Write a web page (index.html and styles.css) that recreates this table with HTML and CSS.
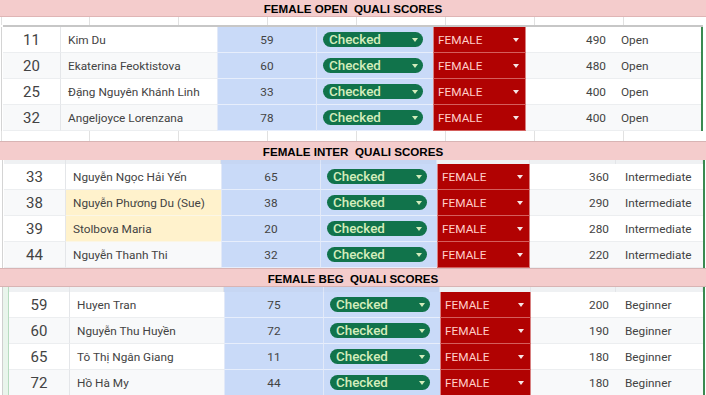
FILE: index.html
```html
<!DOCTYPE html>
<html lang="vi">
<head>
<meta charset="utf-8">
<title>Female Quali Scores</title>
<link rel="stylesheet" href="styles.css">
</head>
<body>
<div class="sheet">

  <section class="sec s1">
    <div class="band">FEMALE OPEN&nbsp; QUALI SCORES</div>
    <div class="gridgap"></div>
    <div class="frozen"><div class="frozen-line"></div><div class="edge"></div><div class="rest"></div></div>
    <div class="row"><div class="gut"></div><div class="c num">11</div><div class="c name">Kim Du</div><div class="c score">59</div><div class="c chk"><span class="chip">Checked<i class="arr"></i></span></div><div class="c sex">FEMALE<i class="arr"></i></div><div class="c pts">490</div><div class="c lvl">Open</div><div class="edge"></div><div class="rest"></div></div>
    <div class="row alt"><div class="gut"></div><div class="c num">20</div><div class="c name">Ekaterina Feoktistova</div><div class="c score">60</div><div class="c chk"><span class="chip">Checked<i class="arr"></i></span></div><div class="c sex">FEMALE<i class="arr"></i></div><div class="c pts">480</div><div class="c lvl">Open</div><div class="edge"></div><div class="rest"></div></div>
    <div class="row"><div class="gut"></div><div class="c num">25</div><div class="c name">Đặng Nguyên Khánh Linh</div><div class="c score">33</div><div class="c chk"><span class="chip">Checked<i class="arr"></i></span></div><div class="c sex">FEMALE<i class="arr"></i></div><div class="c pts">400</div><div class="c lvl">Open</div><div class="edge"></div><div class="rest"></div></div>
    <div class="row alt"><div class="gut"></div><div class="c num">32</div><div class="c name">Angeljoyce Lorenzana</div><div class="c score">78</div><div class="c chk"><span class="chip">Checked<i class="arr"></i></span></div><div class="c sex">FEMALE<i class="arr"></i></div><div class="c pts">400</div><div class="c lvl">Open</div><div class="edge"></div><div class="rest"></div></div>
    <div class="gridgap tail"></div>
  </section>

  <section class="sec s2">
    <div class="band">FEMALE INTER&nbsp; QUALI SCORES</div>
    <div class="shade"><div class="gut"></div><div class="sh"></div><div class="sh"></div><div class="sh blue"></div><div class="sh blue"></div><div class="sh"></div><div class="sh"></div><div class="sh"></div><div class="edge"></div><div class="rest"></div></div>
    <div class="row"><div class="gut"></div><div class="c num">33</div><div class="c name">Nguyễn Ngọc Hải Yến</div><div class="c score">65</div><div class="c chk"><span class="chip">Checked<i class="arr"></i></span></div><div class="c sex">FEMALE<i class="arr"></i></div><div class="c pts">360</div><div class="c lvl">Intermediate</div><div class="edge"></div><div class="rest"></div></div>
    <div class="row alt"><div class="gut"></div><div class="c num">38</div><div class="c name hl">Nguyễn Phương Du (Sue)</div><div class="c score">38</div><div class="c chk"><span class="chip">Checked<i class="arr"></i></span></div><div class="c sex">FEMALE<i class="arr"></i></div><div class="c pts">290</div><div class="c lvl">Intermediate</div><div class="edge"></div><div class="rest"></div></div>
    <div class="row"><div class="gut"></div><div class="c num">39</div><div class="c name hl">Stolbova Maria</div><div class="c score">20</div><div class="c chk"><span class="chip">Checked<i class="arr"></i></span></div><div class="c sex">FEMALE<i class="arr"></i></div><div class="c pts">280</div><div class="c lvl">Intermediate</div><div class="edge"></div><div class="rest"></div></div>
    <div class="row alt"><div class="gut"></div><div class="c num">44</div><div class="c name">Nguyễn Thanh Thi</div><div class="c score">32</div><div class="c chk"><span class="chip">Checked<i class="arr"></i></span></div><div class="c sex">FEMALE<i class="arr"></i></div><div class="c pts">220</div><div class="c lvl">Intermediate</div><div class="edge"></div><div class="rest"></div></div>
  </section>

  <section class="sec s3">
    <div class="band">FEMALE BEG&nbsp; QUALI SCORES</div>
    <div class="shade"><div class="gut"></div><div class="sh"></div><div class="sh"></div><div class="sh blue"></div><div class="sh blue"></div><div class="sh"></div><div class="sh"></div><div class="sh"></div><div class="edge"></div><div class="rest"></div></div>
    <div class="row"><div class="gut"></div><div class="c num">59</div><div class="c name">Huyen Tran</div><div class="c score">75</div><div class="c chk"><span class="chip">Checked<i class="arr"></i></span></div><div class="c sex">FEMALE<i class="arr"></i></div><div class="c pts">200</div><div class="c lvl">Beginner</div><div class="edge"></div><div class="rest"></div></div>
    <div class="row alt"><div class="gut"></div><div class="c num">60</div><div class="c name">Nguyễn Thu Huyền</div><div class="c score">72</div><div class="c chk"><span class="chip">Checked<i class="arr"></i></span></div><div class="c sex">FEMALE<i class="arr"></i></div><div class="c pts">190</div><div class="c lvl">Beginner</div><div class="edge"></div><div class="rest"></div></div>
    <div class="row"><div class="gut"></div><div class="c num">65</div><div class="c name">Tô Thị Ngân Giang</div><div class="c score">11</div><div class="c chk"><span class="chip">Checked<i class="arr"></i></span></div><div class="c sex">FEMALE<i class="arr"></i></div><div class="c pts">180</div><div class="c lvl">Beginner</div><div class="edge"></div><div class="rest"></div></div>
    <div class="row alt"><div class="gut"></div><div class="c num">72</div><div class="c name">Hồ Hà My</div><div class="c score">44</div><div class="c chk"><span class="chip">Checked<i class="arr"></i></span></div><div class="c sex">FEMALE<i class="arr"></i></div><div class="c pts">180</div><div class="c lvl">Beginner</div><div class="edge"></div><div class="rest"></div></div>
  </section>

</div>
</body>
</html>
```

FILE: styles.css
```css
* { box-sizing: border-box; margin: 0; padding: 0; }

html, body {
  width: 706px;
  height: 395px;
  overflow: hidden;
  background: #ffffff;
}

body {
  font-family: Roboto, "Noto Sans", "Liberation Sans", sans-serif;
  color: #434343;
}

.sheet {
  display: flex;
  flex-direction: column;
}

.sec { display: flex; flex-direction: column; }

.s1 { --cols: 3px 58px 156px 100px 116px 93px 86px 89px 2px 3px; }
.s2 { --cols: 4px 62px 155px 100px 116px 93px 86px 87px 2px 1px; }
.s3 { --cols: 9px 61px 154px 100px 116px 91px 85px 87px 2px 1px; }

/* pink title bands */
.band {
  background: #f4cccc;
  font-family: "Liberation Sans", Arial, sans-serif;
  font-weight: 700;
  font-size: 11.6px;
  color: #000;
  text-align: center;
  display: flex;
  align-items: center;
  justify-content: center;
}
.s1 .band { height: 17px; border-bottom: 1px solid #dfb5b5; padding-top: 1px; }
.s2 .band { height: 19px; border-top: 1px solid #d8b4b4; }
.s3 .band { height: 19px; border-top: 1px solid #d8b4b4; border-bottom: 1px solid #d8b4b4; padding-top: 1px; }

/* empty spreadsheet gridlines */
.gridgap {
  height: 8px;
  background:
    linear-gradient(#e1e1e1, #e1e1e1) 1px 0 / 1px 100% no-repeat,
    repeating-linear-gradient(90deg, transparent 0 88px, #e1e1e1 88px 89px) 1px 0 / 100% 100%;
}
.gridgap.tail { height: 10px; }

/* frozen-row gray bar of table 1 */
.frozen {
  height: 2px;
  display: grid;
  grid-template-columns: 3px 698px 2px 3px;
}
.frozen-line { grid-column: 2; background: #c7c7c7; }
.frozen .edge { background: #c7c7c7; }

/* shadow strip above tables 2 and 3 */
.shade {
  display: grid;
  grid-template-columns: var(--cols);
  height: 4px;
}
.s3 .shade { height: 5px; }
.sh { background: #eff1f3; border-right: 1px solid #e3e5e8; }
.sh.blue { background: #c6d6f3; border-right-color: #dbe5f8; }

/* rows */
.row {
  display: grid;
  grid-template-columns: var(--cols);
  height: 26px;
  background: #ffffff;
}
.row.alt { background: #f8f9fa; }

.gut { background: #ffffff; }
.s1 .gut { background: linear-gradient(90deg, #fff 0 1px, #d4d4d4 1px 2px, #fff 2px); }
.s2 .gut, .s2 .shade .gut { background: linear-gradient(90deg, #fff 0 2px, #d4d4d4 2px 3px, #fff 3px); }
.s3 .gut, .s3 .shade .gut {
  background: linear-gradient(90deg, #fff 0 2px, #cfcfcf 2px 3px, #e9f5ec 3px 8px, #b7dcc0 8px 9px);
}

.edge { background: #3a8a50; }
.rest { background: #ffffff; }

.c {
  display: flex;
  align-items: center;
  border-bottom: 1px solid rgba(255, 255, 255, 0.55);
  font-size: 11.8px;
  white-space: nowrap;
  overflow: hidden;
}

.num {
  justify-content: center;
  font-size: 15px;
  border-right: 1px solid #e4e6e9;
  border-bottom-color: #eceef0;
}
.name {
  padding-left: 7px;
  border-bottom-color: #eceef0;
}
.name.hl { background: #fff2cc; border-bottom-color: #fbf6e6; }

.score {
  justify-content: center;
  background: #c9daf8;
  border-left: 1px solid #e2e9f8;
  border-right: 1px solid #e2e9f8;
}
.chk {
  background: #c9daf8;
  padding-left: 6px;
}
.chip {
  width: 100px;
  height: 15px;
  border-radius: 8px;
  background: #11734b;
  color: #d4edbc;
  font-size: 13.4px;
  font-weight: 500;
  display: flex;
  align-items: center;
  justify-content: space-between;
  padding: 0 5px 0 6px;
}
.chip .arr { border-top-color: #d4edbc; }

.sex {
  background: #b10202;
  color: #ffcfc9;
  font-size: 11.8px;
  justify-content: space-between;
  padding: 0 6px 0 4px;
  border-left: 1px solid rgba(255, 255, 255, 0.5);
  border-right: 1px solid rgba(255, 255, 255, 0.5);
  border-bottom-color: rgba(255, 207, 201, 0.45);
}
.sex .arr { border-top-color: #f6e6e6; }

.arr {
  display: block;
  width: 0;
  height: 0;
  border-left: 3.5px solid transparent;
  border-right: 3.5px solid transparent;
  border-top: 4px solid #fff;
}

.pts {
  justify-content: flex-end;
  padding-right: 6px;
  font-size: 11.8px;
  border-bottom-color: #eceef0;
}
.s2 .pts, .s3 .pts { padding-right: 7px; }
.lvl {
  padding-left: 9px;
  font-size: 11.8px;
  border-bottom-color: #eceef0;
}
```
